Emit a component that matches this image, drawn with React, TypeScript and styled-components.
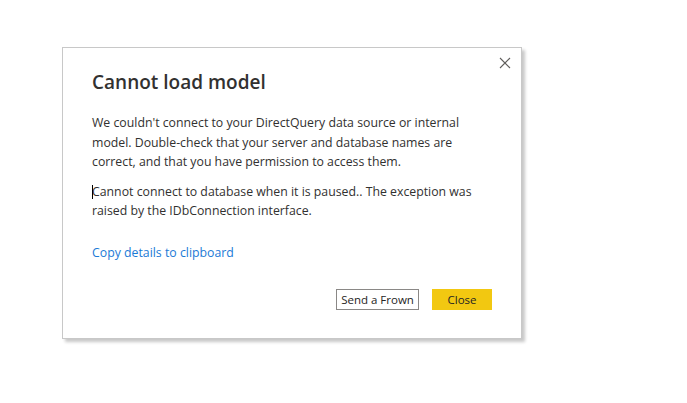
import React from "react";
import styled, { createGlobalStyle } from "styled-components";

const GlobalStyle = createGlobalStyle`
  html, body {
    margin: 0;
    padding: 0;
    background: #ffffff;
  }
  body {
    font-family: "Open Sans", "Noto Sans", "Liberation Sans", sans-serif;
  }
`;

const Page = styled.div`
  width: 687px;
  height: 403px;
  padding: 47px 0 0 62px;
  box-sizing: border-box;
`;

const Dialog = styled.div`
  position: relative;
  width: 460px;
  height: 292px;
  box-sizing: border-box;
  background: #ffffff;
  border: 1px solid #c8c8c8;
  box-shadow: 3px 3px 3px rgba(0, 0, 0, 0.22);
  padding: 20px 29px 0 29px;
  display: flex;
  flex-direction: column;
  color: #252423;
`;

const CloseIcon = styled.button`
  position: absolute;
  top: 6px;
  right: 7px;
  width: 18px;
  height: 18px;
  padding: 0;
  border: none;
  background: transparent;
  display: flex;
  align-items: center;
  justify-content: center;
`;

const Title = styled.h1`
  margin: 0 0 17px;
  font-size: 19px;
  line-height: 28px;
  font-weight: 600;
  color: #323130;
`;

const Paragraph = styled.p`
  position: relative;
  margin: 0 0 10px;
  padding-right: 1px;
  font-size: 12.3px;
  line-height: 19.5px;
  color: #323130;
`;

const Caret = styled.span`
  position: absolute;
  left: 0;
  top: 3px;
  width: 1px;
  height: 14px;
  background: #000000;
`;

const Link = styled.a`
  margin-top: 12px;
  font-size: 12.3px;
  line-height: 19px;
  color: #1b7ad6;
  text-decoration: none;
  cursor: pointer;
`;

const Footer = styled.div`
  margin-top: auto;
  margin-bottom: 28px;
  display: flex;
  justify-content: flex-end;
  gap: 13px;
`;

const Button = styled.button<{ $primary?: boolean }>`
  height: 21px;
  padding: 0;
  box-sizing: border-box;
  width: ${(p) => (p.$primary ? "60px" : "83px")};
  font-family: "Open Sans", "Noto Sans", sans-serif;
  font-size: 11.5px;
  color: #252423;
  background: ${(p) => (p.$primary ? "#f2c811" : "#ffffff")};
  border: 1px solid ${(p) => (p.$primary ? "#f2c811" : "#8a8886")};
  cursor: pointer;
`;

const App = () => {
  return (
    <Page>
      <GlobalStyle />
      <Dialog>
        <CloseIcon aria-label="Close">
          <svg width="12" height="12" viewBox="0 0 12 12">
            <path d="M1 1 L11 11 M11 1 L1 11" stroke="#605e5c" strokeWidth="1.1" />
          </svg>
        </CloseIcon>
        <Title>Cannot load model</Title>
        <Paragraph>
          We couldn't connect to your DirectQuery data source or internal
          model. Double-check that your server and database names are
          correct, and that you have permission to access them.
        </Paragraph>
        <Paragraph>
          <Caret />
          Cannot connect to database when it is paused.. The exception was
          raised by the IDbConnection interface.
        </Paragraph>
        <Link>Copy details to clipboard</Link>
        <Footer>
          <Button>Send a Frown</Button>
          <Button $primary>Close</Button>
        </Footer>
      </Dialog>
    </Page>
  );
};

export default App;
